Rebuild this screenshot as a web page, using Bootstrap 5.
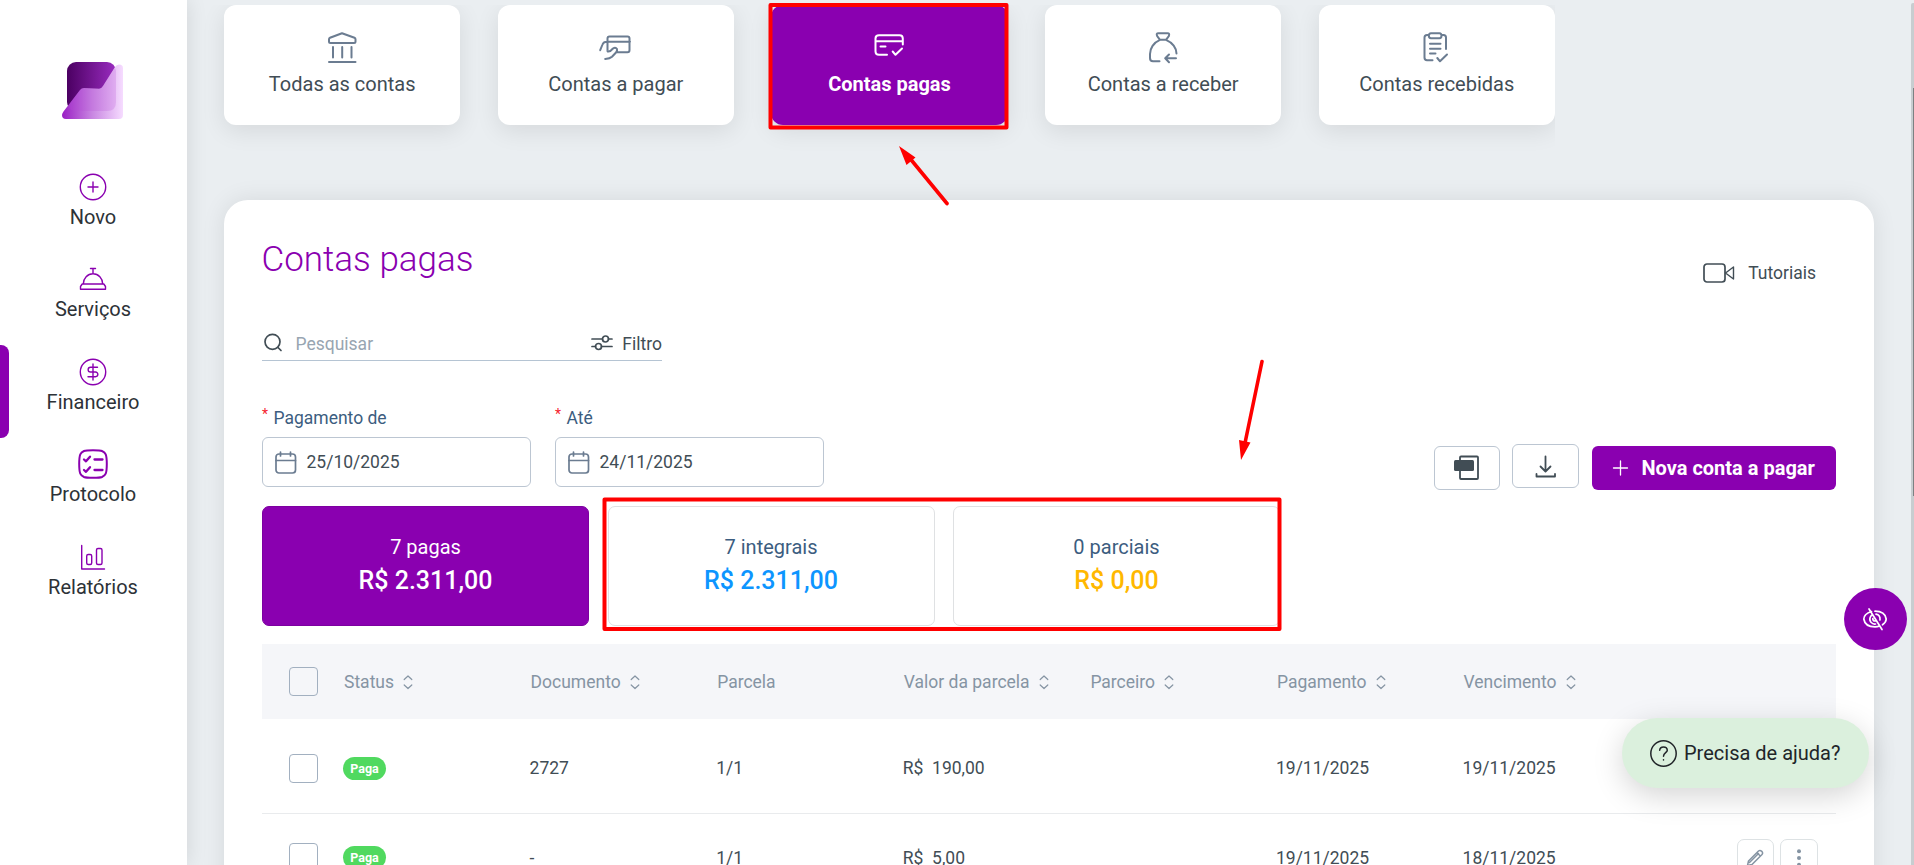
<!DOCTYPE html>
<html lang="pt-BR">
<head>
<meta charset="utf-8">
<title>Contas pagas</title>
<link rel="stylesheet" href="https://cdn.jsdelivr.net/npm/bootstrap@5.3.0/dist/css/bootstrap.min.css">
<style>
:root{--roxo:#8a00b0;--texto:#414d55}
body{font-family:Roboto,"Liberation Sans",sans-serif;font-size:17.5px;line-height:26px;color:var(--texto);background:#eaeef1;height:865px;overflow:hidden}
svg{display:block;fill:none;stroke:currentColor;stroke-linecap:round;stroke-linejoin:round;overflow:visible;flex:none}
.tela{height:865px}
.roxo{color:var(--roxo)}
.bg-roxo{background:var(--roxo);color:#fff}
.lateral{width:187px;height:865px;padding:62px 2px 0 0;box-shadow:0 0 20px rgba(0,0,0,.11);z-index:1}
.lateral .logo{margin-bottom:40.8px}
.lateral .logo svg{stroke:none}
.item{height:92.5px;padding:11px 0 0 1px;font-size:20px;line-height:30px;color:#2d3237;text-decoration:none}
.item .icone{height:31px;padding-top:1px;margin-left:-1px;color:var(--roxo)}
.item .ativo{left:0;top:0;width:9px;height:93px;border-radius:0 8px 8px 0}
.conteudo{padding:5px 40px 0 37px}
.abas{width:1331px;gap:37.3px;clip-path:inset(0 0 -60px -37px)}
.aba{flex:1 1 0;height:120px;padding-top:27px;border-radius:12px;font-size:20px;line-height:30px;box-shadow:0 6px 25px rgba(0,0,0,.09)}
.aba svg{color:#6b7c91;margin-bottom:5px;margin-left:-1px;stroke-width:2}
.aba.bg-roxo svg{color:#fff}
.painel{margin-top:75px;height:720px;border-radius:24px;padding:38px 38px 0;box-shadow:0 0 25px rgba(0,0,0,.09)}
.topo{height:47px}
.titulo{font-size:35px;line-height:42px;font-weight:300;margin:1px 0 0 -.5px}
.tutoriais{margin:22px 20px 0 0;gap:13px}
.busca{width:400px;height:30px;margin-top:46px;border-bottom:1px solid #b5c4d3}
.datas{margin-top:43px}
.rotulo{color:#3c5d80;line-height:28px}
.rotulo i{color:#f5222d;font-size:14px;font-style:normal;line-height:20px;width:11.5px}
.campo{width:268.5px;height:50px;margin-top:5px;padding-left:12px;gap:9.5px;border:1px solid #bcc6d2;border-radius:6px}
.campo svg{color:#6b7c91}
.botao{height:44px;border:1px solid #bcc6d2;border-radius:6px}
.novo-btn{width:244px;font-size:20px;border:0;padding-left:21px;gap:13.5px}
.resumo{margin-top:16px;gap:18.5px}
.bloco{width:327px;height:120px;border:1px solid #dfe1e3;border-radius:7px;padding-top:25px;font-size:20px;line-height:30px;color:#3c5d80}
.bloco.bg-roxo{color:#fff;border-color:#7d00a0}
.bloco strong{font-size:25px;font-weight:500;line-height:38px;display:block}
.tabela{margin-top:18px;table-layout:fixed;width:1574px;border-collapse:collapse}
.tabela th{height:75px;background:#f5f6f9;color:#8594a3;font-weight:400;padding:0 0 0 1px}
.tabela td{height:89px;border-bottom:1px solid #e9ebed;padding:0}
.tabela .folga td{height:5px;border:0}
.caixa{width:29px;height:29px;border:1px solid #a2b0c0;border-radius:4px;background:#fff;margin-left:27px}
th .caixa{background:transparent;margin-left:26px}
.tabela svg.ord{display:inline-block;color:#8594a3;margin-left:9px;vertical-align:-2px}
.paga{display:block;background:#50d95f;color:#fff;font-size:12.5px;font-weight:700;line-height:23px;width:43px;height:23px;border-radius:12px;text-align:center}
.mini{width:37.5px;height:38px;border:1px solid #dde2e4;border-radius:7px;color:#8594a3}
.ocultar{left:1844px;top:588px;width:63px;height:62px;z-index:3}
.ajuda{left:1622px;top:718px;width:247px;height:70px;border-radius:35px;background:#dbf0dd;color:#212529;font-size:20px;box-shadow:0 8px 30px rgba(0,0,0,.17);padding-left:28px;gap:7px;z-index:3}
.trilho{right:0;top:3px;width:3px;height:862px;border-radius:2px 0 0 0;background:#c8cdd0;z-index:3;padding:85px 0 0 2px}
.trilho span{display:block;width:1px;height:408px;background:#7c8082}
.marcas{left:0;top:0;z-index:4;pointer-events:none}
</style>
</head>
<body>
<div class="tela d-flex position-relative overflow-hidden">
  <nav class="lateral bg-white position-relative flex-shrink-0">
    <div class="logo d-flex justify-content-center">
      <svg width="61" height="57" viewBox="0 0 61 57">
        <defs>
          <linearGradient id="g1"><stop offset="0" stop-color="#4b0062"/><stop offset="1" stop-color="#9a2cc0"/></linearGradient>
          <linearGradient id="g2"><stop offset="0" stop-color="#9a1fc4"/><stop offset=".5" stop-color="#c987e2"/><stop offset="1" stop-color="#f6dcff"/></linearGradient>
        </defs>
        <rect x="5" y="0" width="49" height="49" rx="9" fill="url(#g1)"/>
        <path d="M57 2.500Q61 2.500 61 6V53Q61 57 57 57H4Q0 57 0 53Q0 51.500 1.500 49.500L18 28Q19.500 26 22 26L37 26.800Q39 27 41 24L53 5Q54.500 2.500 57 2.500Z" fill="url(#g2)"/>
        <path d="M52.500 6 41 24Q39 27 37 26.800L22 26Q19.500 26 18 28L6 44Q8 49 14 49H45Q54 49 54 40V9Q54 7 52.500 6Z" fill="#b44fd4" opacity=".22"/>
      </svg>
    </div>
    <a class="item d-block text-center"><div class="icone d-flex justify-content-center align-items-center"><svg width="28" height="28" stroke-width="1.400"><circle cx="14" cy="14" r="12.700"/><path d="M14 9v10M9 14h10"/></svg></div>Novo</a>
    <a class="item d-block text-center"><div class="icone d-flex justify-content-center align-items-center"><svg width="28" height="28" stroke-width="1.400"><path d="M11.500 3.500h5M14 3.500v5M4.300 19a9.700 10.300 0 0 1 19.400 0M3.200 19h21.600l1.700 2.500v2.800h-25v-2.800z"/></svg></div>Serviços</a>
    <a class="item d-block text-center position-relative"><span class="ativo bg-roxo position-absolute"></span><div class="icone d-flex justify-content-center align-items-center"><svg width="28" height="28" stroke-width="1.400"><circle cx="14" cy="14" r="12.700"/><path d="M14 6v16M18.500 9.300H11.500a2.350 2.350 0 0 0 0 4.700h5a2.350 2.350 0 0 1 0 4.700H9"/></svg></div>Financeiro</a>
    <a class="item d-block text-center"><div class="icone d-flex justify-content-center align-items-center"><svg width="30" height="30" stroke-width="2"><path d="M15 1.200C19 1.200 22.500 1.200 24 2 27.500 3.500 28.800 5 28.800 15S27.500 26.500 24 28Q22 28.800 15 28.800T6 28C2.500 26.500 1.200 25 1.200 15S2.500 3.500 6 2Q8 1.200 15 1.200Z"/><path d="m6 10.500 2 1.800 4-4.600M6 21l2 1.800 4-4.600M16.500 10.500h8M16.500 21h8" stroke-width="2.300"/></svg></div>Protocolo</a>
    <a class="item d-block text-center"><div class="icone d-flex justify-content-center align-items-center"><svg width="28" height="28" stroke-width="1.400"><path d="M2.700 2.500V26H25.500"/><rect x="7.700" y="11.500" width="5" height="10" rx="1.500"/><rect x="17.500" y="5.500" width="5.500" height="16" rx="1.500"/></svg></div>Relatórios</a>
  </nav>

  <main class="conteudo flex-grow-1">
    <div class="abas d-flex">
      <div class="aba bg-white d-flex flex-column align-items-center"><svg width="32" height="32"><path d="M3 7.200Q3 6.200 4 5.800L16 1.200 28.500 5.800Q29.500 6.200 29.500 7.200V9.500Q29.500 11 28 11H4.500Q3 11 3 9.500ZM7 15V25.500M16.200 15V25.500M25.500 15V25.500M3 29.900H29.500"/></svg>Todas as contas</div>
      <div class="aba bg-white d-flex flex-column align-items-center"><svg width="32" height="32"><path d="M9 19.500Q8.500 20 8.500 18V6.500Q8.500 4.500 10.500 4.500H28.500Q30.500 4.500 30.500 6.500V18Q30.500 20.300 28.500 20.300H17.500M31 9.800H8Q4.500 9.800 3.500 12.500L1.200 18.200M9 19.500Q11 20 14 16.500Q16.500 14.800 18 17Q18.600 18.500 17 20.500L13 24.800Q11 26.600 6.200 27"/></svg>Contas a pagar</div>
      <div class="aba bg-roxo fw-bold d-flex flex-column align-items-center"><svg width="32" height="32"><path d="M14 22.700H6Q2.500 22.700 2.500 19.200V6.500Q2.500 3.200 6 3.200H26.500Q29.800 3.200 29.800 6.500V12.500M3 9.200H29.500M7.500 14.500H12.500M19.700 19.500 22.500 22.800 29 16.500"/></svg>Contas pagas</div>
      <div class="aba bg-white d-flex flex-column align-items-center"><svg width="32" height="32"><path d="M13 7.800 10.200 4.200Q8.800 1.200 11.500 1.200H20.500Q23 1.200 21.800 4.200L19 7.800ZM13 7.800C6.500 10.500 3 16.500 3 22V26Q3 29.300 6 29.300H12.500M19 7.800C25.500 10.500 29.500 16 29.500 21.500M29 26.300H18.500M22 22.500 18.200 26.300 22 30.200"/></svg>Contas a receber</div>
      <div class="aba bg-white d-flex flex-column align-items-center"><svg width="32" height="32"><path d="M8.500 3H7Q4.500 3 4.500 5.500V25.500Q4.500 28.300 7 28.300H12.500M21.500 3H23.500Q26 3 26 5.500V17M8.800 3.800Q8.800 1.200 11 1.200H19.500Q21.500 1.200 21.500 3.800 21.500 6.200 19.500 6.200H11Q8.800 6.200 8.800 3.800ZM10 11.800H20.500M10 16.700H20.500M10 21.500H15.500M17.300 26 20 29.300 27 22.500"/></svg>Contas recebidas</div>
    </div>

    <section class="painel bg-white">
      <div class="topo d-flex justify-content-between align-items-start">
        <h1 class="titulo roxo">Contas pagas</h1>
        <div class="tutoriais d-flex align-items-center"><svg width="32" height="20" stroke-width="1.700"><rect x="1" y="1" width="21" height="18" rx="3"/><path d="M22.500 10 30.500 4V16Z" stroke-width="1.400"/></svg>Tutoriais</div>
      </div>
      <div class="busca d-flex align-items-start">
        <svg width="20" height="20" stroke-width="1.700" style="margin:2px 12.500px 0 1px"><circle cx="9.500" cy="8.800" r="7.500"/><path d="m15 14.500 3 3"/></svg>
        <span style="color:#98a5b1">Pesquisar</span>
        <svg class="ms-auto" width="22" height="16" stroke-width="1.700" style="margin:4px 9px 0 0"><path d="M1 4H11.500M17.500 4H21M1 11.500H4.500M10.500 11.500H21"/><circle cx="14.500" cy="4" r="3"/><circle cx="7.500" cy="11.500" r="3"/></svg>
        Filtro
      </div>

      <div class="d-flex justify-content-between datas">
        <div class="d-flex" style="gap:24.500px">
          <div><div class="rotulo d-flex"><i>*</i>Pagamento de</div>
            <div class="campo d-flex align-items-center"><svg width="22" height="23" stroke-width="1.700"><rect x="1" y="3" width="19.500" height="19" rx="3"/><path d="M1 9.500H20.500M5.500 1V5M15.500 1V5"/></svg>25/10/2025</div></div>
          <div><div class="rotulo d-flex"><i>*</i>Até</div>
            <div class="campo d-flex align-items-center"><svg width="22" height="23" stroke-width="1.700"><rect x="1" y="3" width="19.500" height="19" rx="3"/><path d="M1 9.500H20.500M5.500 1V5M15.500 1V5"/></svg>24/11/2025</div></div>
        </div>
        <div class="d-flex align-items-start" style="margin-top:42px">
          <div class="botao d-flex justify-content-center align-items-center" style="width:66px;margin-right:12px"><svg width="26" height="26" stroke-width="1.800"><rect x="6" y="1.500" width="18" height="22.500" rx="1"/><rect x="0" y="5" width="20" height="11" rx="1.500" fill="#414d55" stroke="none"/></svg></div>
          <div class="botao d-flex justify-content-center align-items-center" style="width:67px;margin:-2px 13px 0 0"><svg width="22" height="24" stroke-width="1.800"><path d="M10.500 2.500V17M5.500 12.500l5 5 5-5M1.500 20V22.500H20V20"/></svg></div>
          <div class="botao novo-btn bg-roxo fw-bold d-flex align-items-center"><svg width="15" height="16" stroke-width="1.300"><path d="M7.500 1V15M.5 8H14.500"/></svg>Nova conta a pagar</div>
        </div>
      </div>

      <div class="d-flex resumo text-center">
        <div class="bloco bg-roxo">7 pagas<strong>R$ 2.311,00</strong></div>
        <div class="bloco">7 integrais<strong style="color:#0d95ff">R$ 2.311,00</strong></div>
        <div class="bloco">0 parciais<strong style="color:#ffb800">R$ 0,00</strong></div>
      </div>

      <table class="tabela">
        <colgroup><col style="width:81px"><col style="width:186.600px"><col style="width:186.600px"><col style="width:186.600px"><col style="width:186.600px"><col style="width:186.600px"><col style="width:186.600px"><col style="width:186.600px"><col></colgroup>
        <thead><tr>
          <th><div class="caixa"></div></th>
          <th>Status<svg class="ord" width="10" height="16" stroke-width="1.200"><path d="m1.200 5.500 3.800-3.500 3.800 3.500M1.200 11l3.800 3.500 3.800-3.500"/></svg></th>
          <th>Documento<svg class="ord" width="10" height="16" stroke-width="1.200"><path d="m1.200 5.500 3.800-3.500 3.800 3.500M1.200 11l3.800 3.500 3.800-3.500"/></svg></th>
          <th>Parcela</th>
          <th>Valor da parcela<svg class="ord" width="10" height="16" stroke-width="1.200"><path d="m1.200 5.500 3.800-3.500 3.800 3.500M1.200 11l3.800 3.500 3.800-3.500"/></svg></th>
          <th>Parceiro<svg class="ord" width="10" height="16" stroke-width="1.200"><path d="m1.200 5.500 3.800-3.500 3.800 3.500M1.200 11l3.800 3.500 3.800-3.500"/></svg></th>
          <th>Pagamento<svg class="ord" width="10" height="16" stroke-width="1.200"><path d="m1.200 5.500 3.800-3.500 3.800 3.500M1.200 11l3.800 3.500 3.800-3.500"/></svg></th>
          <th>Vencimento<svg class="ord" width="10" height="16" stroke-width="1.200"><path d="m1.200 5.500 3.800-3.500 3.800 3.500M1.200 11l3.800 3.500 3.800-3.500"/></svg></th>
          <th></th>
        </tr></thead>
        <tbody>
          <tr class="folga"><td colspan="9"></td></tr>
          <tr><td><div class="caixa"></div></td><td><span class="paga">Paga</span></td><td>2727</td><td>1/1</td><td>R$&nbsp; 190,00</td><td></td><td>19/11/2025</td><td>19/11/2025</td><td></td></tr>
          <tr><td><div class="caixa"></div></td><td><span class="paga">Paga</span></td><td>-</td><td>1/1</td><td>R$&nbsp; 5,00</td><td></td><td>19/11/2025</td><td>18/11/2025</td>
            <td><div class="d-flex justify-content-end" style="gap:6px;padding-right:18.500px">
              <div class="mini d-flex justify-content-center align-items-center"><svg width="18" height="18" stroke-width="1.500"><path d="M1.500 16.500 2.500 12 12.500 2Q14 .8 15.800 2.300 17.300 4 16 5.500L6 15.500ZM11 3.700 14.300 7M3.500 13.500 12.500 4.500"/></svg></div>
              <div class="mini d-flex justify-content-center align-items-center"><svg width="4" height="18" style="fill:#8594a3;stroke:none"><circle cx="2" cy="2.300" r="2"/><circle cx="2" cy="9" r="2"/><circle cx="2" cy="15.700" r="2"/></svg></div>
            </div></td></tr>
        </tbody>
      </table>
    </section>
  </main>

  <div class="ocultar bg-roxo rounded-circle position-absolute d-flex justify-content-center align-items-center"><svg width="24" height="22" stroke-width="1.700" style="margin-right:1px"><path d="M8.500 3.500Q.8 6 .8 11 2 18.800 12 18.800 14.500 18.800 16.500 18M12 3.200Q22 3.200 23.200 11 23 14.500 19.500 16.800M6 1 19 21.500M8.300 7.500Q5.500 11 8 14.300 10 16.500 12.500 16M13 6.200Q17.500 7 17 12M9.800 10.500Q9.800 13 12 13"/></svg></div>
  <div class="ajuda position-absolute d-flex align-items-center"><svg width="27" height="27" stroke-width="1.500"><circle cx="13.500" cy="13.500" r="12.700"/><path d="M9.700 10.300Q9.900 7 13.500 7T17.300 10.200C17.300 12.500 13.500 13 13.500 16.200M13.500 19.700V19.900"/></svg>Precisa de ajuda?</div>
  <div class="trilho position-absolute"><span></span></div>
  <svg class="marcas position-absolute" width="1914" height="865" style="color:#f00" stroke-width="4">
    <rect x="770.500" y="5" width="236" height="122.500"/>
    <rect x="604.500" y="499.500" width="675" height="129.500"/>
    <path d="M947 203.500 908 156M1262 361.500 1245 443" stroke-width="3.600"/>
    <path d="M899 146 915.500 157.500 906.500 165ZM1241 460 1239 440 1250.500 442.500Z" fill="#f00" stroke="none"/>
  </svg>
</div>
<script src="https://cdn.jsdelivr.net/npm/bootstrap@5.3.0/dist/js/bootstrap.bundle.min.js"></script>
</body>
</html>
